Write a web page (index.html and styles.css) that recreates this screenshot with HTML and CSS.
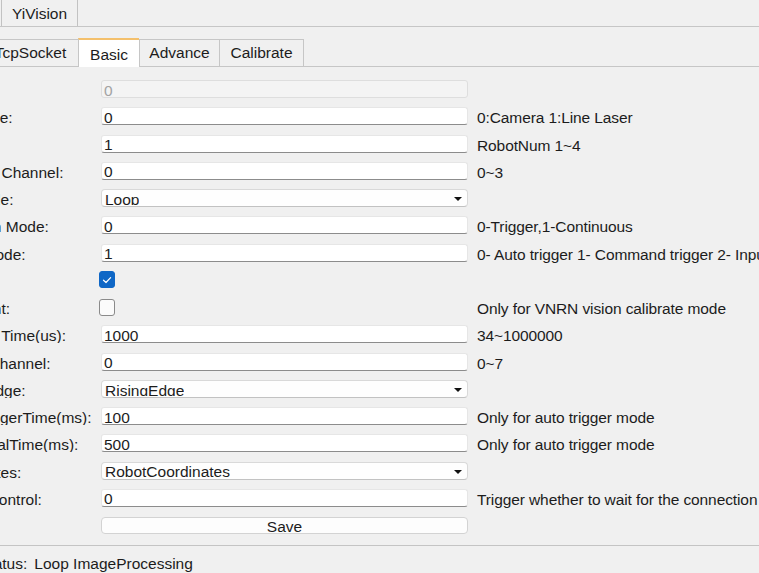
FILE: index.html
```html
<!DOCTYPE html>
<html>
<head>
<meta charset="utf-8">
<title>YiVision</title>
<link rel="stylesheet" href="styles.css">
</head>
<body>
<div class="app">
  <div class="topbar">
    <div class="toptab">YiVision</div>
  </div>

  <div class="tabbar">
    <div class="tab tab-tcp">TcpSocket</div>
    <div class="tab tab-basic active">Basic</div>
    <div class="tab tab-adv">Advance</div>
    <div class="tab tab-cal">Calibrate</div>
  </div>

  <div class="pane">
    <div class="form">
      <div class="label">Index:</div>
      <div class="field disabled"><span class="val">0</span></div>
      <div class="hint"></div>

      <div class="label">CamType:</div>
      <div class="field"><span class="val">0</span></div>
      <div class="hint">0:Camera 1:Line Laser</div>

      <div class="label">Robot:</div>
      <div class="field"><span class="val">1</span></div>
      <div class="hint">RobotNum 1~4</div>

      <div class="label">Camera Channel:</div>
      <div class="field"><span class="val">0</span></div>
      <div class="hint">0~3</div>

      <div class="label">RunMode:</div>
      <div class="combo"><span class="combo-text">Loop</span><svg class="arrow" width="8" height="4" viewBox="0 0 8 4"><path d="M0 0H8L4 4Z" fill="#111"/></svg></div>
      <div class="hint"></div>

      <div class="label">Function Mode:</div>
      <div class="field"><span class="val">0</span></div>
      <div class="hint">0-Trigger,1-Continuous</div>

      <div class="label">PhotoMode:</div>
      <div class="field"><span class="val">1</span></div>
      <div class="hint">0- Auto trigger 1- Command trigger 2- Input trigger</div>

      <div class="label">Enable:</div>
      <div class="check-cell"><span class="check checked"><svg width="10" height="8" viewBox="0 0 10 8"><path d="M1.5 4.2L4 6.5L8.6 1.6" fill="none" stroke="#fff" stroke-width="1.2" stroke-linecap="round" stroke-linejoin="round"/></svg></span></div>
      <div class="hint"></div>

      <div class="label">TestPoint:</div>
      <div class="check-cell"><span class="check"></span></div>
      <div class="hint">Only for VNRN vision calibrate mode</div>

      <div class="label">Capture Time(us):</div>
      <div class="field"><span class="val">1000</span></div>
      <div class="hint">34~1000000</div>

      <div class="label">OutputChannel:</div>
      <div class="field"><span class="val">0</span></div>
      <div class="hint">0~7</div>

      <div class="label">SignalEdge:</div>
      <div class="combo"><span class="combo-text">RisingEdge</span><svg class="arrow" width="8" height="4" viewBox="0 0 8 4"><path d="M0 0H8L4 4Z" fill="#111"/></svg></div>
      <div class="hint"></div>

      <div class="label">AutoTriggerTime(ms):</div>
      <div class="field"><span class="val">100</span></div>
      <div class="hint">Only for auto trigger mode</div>

      <div class="label">IOIntervalTime(ms):</div>
      <div class="field"><span class="val">500</span></div>
      <div class="hint">Only for auto trigger mode</div>

      <div class="label">Cordinates:</div>
      <div class="combo"><span class="combo-text">RobotCoordinates</span><svg class="arrow" width="8" height="4" viewBox="0 0 8 4"><path d="M0 0H8L4 4Z" fill="#111"/></svg></div>
      <div class="hint"></div>

      <div class="label">ServerControl:</div>
      <div class="field"><span class="val">0</span></div>
      <div class="hint">Trigger whether to wait for the connection</div>

      <div class="label"></div>
      <div class="button"><span class="button-text">Save</span></div>
      <div class="hint"></div>
    </div>
  </div>

  <div class="status">
    <span class="status-label">Cam Status:</span>
    <span class="status-value">Loop ImageProcessing</span>
  </div>
</div>
</body>
</html>
```

FILE: styles.css
```css
html, body {
  margin: 0;
  padding: 0;
}

body {
  width: 759px;
  height: 573px;
  overflow: hidden;
  background: #f0f0f0;
  font-family: "Liberation Sans", Arial, sans-serif;
  font-size: 15.5px;
  color: #1c1c1c;
}

.app {
  width: 759px;
  height: 573px;
  overflow: hidden;
}

/* top tab strip */
.topbar {
  height: 26px;
  border-bottom: 1px solid #c6c6c6;
  display: flex;
  padding-left: 1px;
}

.toptab {
  width: 77px;
  box-sizing: border-box;
  height: 26px;
  line-height: 27px;
  text-align: center;
  border-left: 1px solid #c2c2c2;
  border-right: 1px solid #c2c2c2;
  background: #f0f0f0;
}

/* inner tab strip */
.tabbar {
  margin-top: 11px;
  height: 28px;
  border-bottom: 1px solid #c6c6c6;
  display: flex;
  align-items: flex-end;
  margin-left: -17px;
}

.tab {
  box-sizing: border-box;
  height: 27px;
  line-height: 26px;
  text-align: center;
  border-top: 1px solid #c6c6c6;
  border-left: 1px solid #c6c6c6;
  background: #f0f0f0;
  white-space: nowrap;
}

.tab-tcp { width: 95px; border-left: none; }
.tab-basic { width: 61px; }
.tab-adv { width: 80px; }
.tab-cal { width: 85px; border-right: 1px solid #c6c6c6; }

.tab.active {
  height: 29px;
  margin-bottom: -1px;
  background: #ffffff;
  border-top: 2px solid #f4c06c;
  line-height: 29px;
  position: relative;
  z-index: 1;
}

/* pane */
.pane {
  padding-top: 13px;
  padding-bottom: 11px;
}

.form {
  margin-left: -58px;
  display: grid;
  grid-template-columns: 159px 367px 1fr;
  grid-auto-rows: 18px;
  row-gap: 9.25px;
  align-items: center;
}

.label {
  box-sizing: border-box;
  height: 18px;
  padding-top: 3px;
  line-height: 15px;
  white-space: nowrap;
  overflow: hidden;
}

.hint {
  box-sizing: border-box;
  height: 18px;
  padding-top: 3px;
  padding-left: 9px;
  line-height: 15px;
  letter-spacing: -0.1px;
  white-space: nowrap;
}

.field {
  box-sizing: border-box;
  height: 18px;
  background: #ffffff;
  border: 1px solid #e6e6e6;
  border-bottom: 1px solid #8c8c8c;
  border-radius: 3px;
  padding-left: 2px;
  padding-top: 1.5px;
  line-height: 15px;
  overflow: hidden;
}

.field.disabled {
  background: #f4f4f4;
  border: 1px solid #dedede;
  color: #a3a3a3;
}

.combo {
  box-sizing: border-box;
  height: 18px;
  background: #fefefe;
  border: 1px solid #d9d9d9;
  border-bottom-color: #c2c2c2;
  border-radius: 4px;
  padding-left: 3px;
  padding-right: 5px;
  display: flex;
  align-items: flex-start;
  justify-content: space-between;
}

.combo-text {
  display: block;
  margin-top: 1.8px;
  height: 13.6px;
  line-height: 15px;
  overflow: hidden;
}

.arrow {
  margin-top: 7px;
  flex: none;
}

.check-cell {
  display: flex;
  align-items: center;
  margin-left: -2px;
}

.check {
  box-sizing: border-box;
  width: 16px;
  height: 17px;
  border-radius: 3px;
  border: 1px solid #8a8a8a;
  background: #fbfbfb;
  display: flex;
  align-items: center;
  justify-content: center;
}

.check.checked {
  background: #0f67c6;
  border-color: #0f67c6;
}

.button {
  box-sizing: border-box;
  height: 17px;
  margin-top: 1px;
  background: #fdfdfd;
  border: 1px solid #d3d3d3;
  border-radius: 4px;
  display: flex;
  justify-content: center;
  align-items: flex-start;
}

.button-text {
  display: block;
  margin-top: 1.3px;
  height: 13px;
  line-height: 15px;
  overflow: hidden;
}

/* status */
.status {
  border-top: 1px solid #c4c4c4;
  margin-left: -58px;
  padding-top: 5px;
  line-height: 26px;
  display: flex;
  gap: 7px;
  white-space: nowrap;
}
```
